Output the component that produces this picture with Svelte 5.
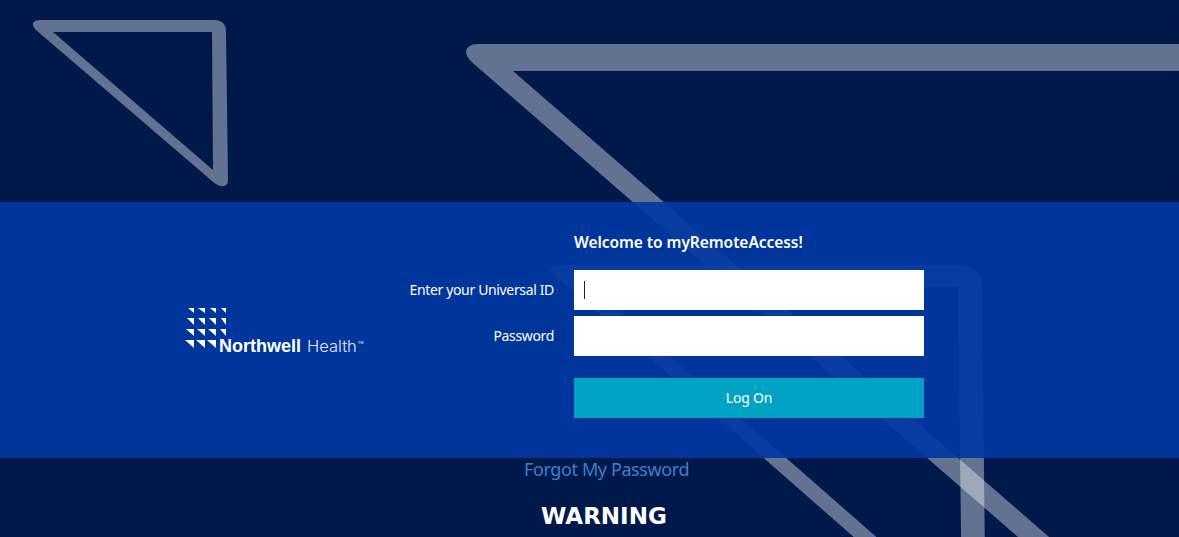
<script>
  const rows = [
    { y: 308, h: 5, widths: [6, 7, 6, 5] },
    { y: 318, h: 7, widths: [7, 7, 7, 5] },
    { y: 329, h: 7, widths: [8, 8, 8, 6] },
    { y: 340, h: 8, widths: [9, 9, 9] }
  ];
  const rights = [194, 205, 216, 226];
  const tris = rows.flatMap((r) =>
    r.widths.map((w, i) => {
      const y = r.y - 303;
      const right = rights[i] - 180;
      return `${right - w},${y} ${right},${y} ${right},${y + r.h}`;
    })
  );
</script>

<div class="page">
  <svg class="shapes" viewBox="0 0 1179 537" aria-hidden="true">
    <path d="M40 20 H214 Q226 20 226 32 L228 180 Q228 187 221 186 Q218 186 212 181 L36 30 Q32 26 33 23 Q35 20 40 20 Z M53 32 L213 170 L212 32 Z" />
    <path d="M478 44 H1500 V956 L474 64 Q466 57 466 52 Q467 44 478 44 Z M513 71 H1500 V929 Z" />
    <path d="M560 265 H958 Q982 265 982 289 L986 653 L556 276 Q550 272 550 269 Q551 265 560 265 Z M591 287 H958 L962 612 Z" />
  </svg>

  <div class="top"></div>

  <section class="band">
    <div class="logo">
      <svg class="mark" viewBox="0 0 60 52" aria-hidden="true">
        {#each tris as points}
          <polygon {points} />
        {/each}
      </svg>
      <div class="wordmark"><strong>Northwell</strong> <span>Health</span><small>TM</small></div>
    </div>

    <form class="form" onsubmit={(e) => e.preventDefault()}>
      <h1>Welcome to myRemoteAccess!</h1>
      <label class="row">
        <span>Enter your Universal ID</span>
        <span class="field"><input type="text" /><i class="caret"></i></span>
      </label>
      <label class="row second">
        <span>Password</span>
        <span class="field"><input type="password" /></span>
      </label>
      <button type="submit">Log On</button>
    </form>
  </section>

  <div class="below">
    <a href="#forgot">Forgot My Password</a>
    <h2>WARNING</h2>
  </div>
</div>

<style>
  :global(body) {
    margin: 0;
    background: #00194a;
    overflow: hidden;
  }
  .page {
    position: relative;
    height: 537px;
    overflow: hidden;
    font-family: "Noto Sans", "Open Sans", sans-serif;
    color: #fff;
  }
  .shapes {
    position: absolute;
    inset: 0;
    width: 1179px;
    height: 537px;
  }
  .shapes path {
    fill: #fff;
    fill-opacity: 0.39;
    fill-rule: evenodd;
  }
  .top {
    height: 202px;
  }
  .band {
    position: relative;
    height: 256px;
    background: rgba(0, 55, 162, 0.92);
    display: flex;
  }
  .logo {
    position: relative;
    width: 574px;
    flex: none;
  }
  .mark {
    position: absolute;
    left: 180px;
    top: 101px;
    width: 60px;
    height: 52px;
    fill: #fff;
  }
  .wordmark {
    position: absolute;
    left: 219px;
    top: 131px;
    font-family: "Liberation Sans", sans-serif;
    font-size: 18px;
    line-height: 20px;
    white-space: nowrap;
  }
  .wordmark strong {
    font-weight: 700;
  }
  .wordmark span {
    font-family: "Inter", sans-serif;
    font-weight: 300;
    opacity: 0.9;
    font-size: 16.5px;
    margin-left: 1px;
  }
  .wordmark small {
    font-size: 4px;
    vertical-align: 8px;
    margin-left: 1px;
  }
  .form {
    width: 350px;
    padding-top: 30px;
  }
  h1 {
    margin: 0 0 18px;
    font-size: 15.5px;
    line-height: 20px;
    font-weight: 600;
    letter-spacing: -0.05px;
    white-space: nowrap;
  }
  .row {
    display: block;
    position: relative;
    height: 40px;
    font-size: 14px;
    letter-spacing: -0.35px;
  }
  .row.second {
    margin-top: 6px;
  }
  .row > span:first-child {
    position: absolute;
    right: 370px;
    top: 0;
    line-height: 40px;
    white-space: nowrap;
  }
  .field {
    display: block;
    position: relative;
    height: 40px;
  }
  input {
    display: block;
    box-sizing: border-box;
    width: 350px;
    height: 40px;
    border: 0;
    padding: 0 10px;
    background: #fff;
    outline: none;
    border-radius: 0;
  }
  .caret {
    position: absolute;
    left: 10px;
    top: 11px;
    width: 1px;
    height: 18px;
    background: #222;
  }
  button {
    display: block;
    width: 350px;
    height: 40px;
    margin-top: 22px;
    padding: 0 0 2px;
    border: 0;
    border-radius: 0;
    background: #00a3c4;
    color: #fff;
    font: inherit;
    font-size: 14px;
    letter-spacing: -0.2px;
  }
  .below {
    position: relative;
    text-align: left;
  }
  .below a {
    display: block;
    margin-left: 524px;
    color: #3a80d2;
    font-size: 18px;
    line-height: 22px;
    letter-spacing: -0.39px;
    text-decoration: none;
    white-space: nowrap;
  }
  h2 {
    margin: 22px 0 0 541px;
    font-family: "DejaVu Sans", sans-serif;
    font-size: 23px;
    line-height: 28px;
    font-weight: 700;
    white-space: nowrap;
  }
</style>
